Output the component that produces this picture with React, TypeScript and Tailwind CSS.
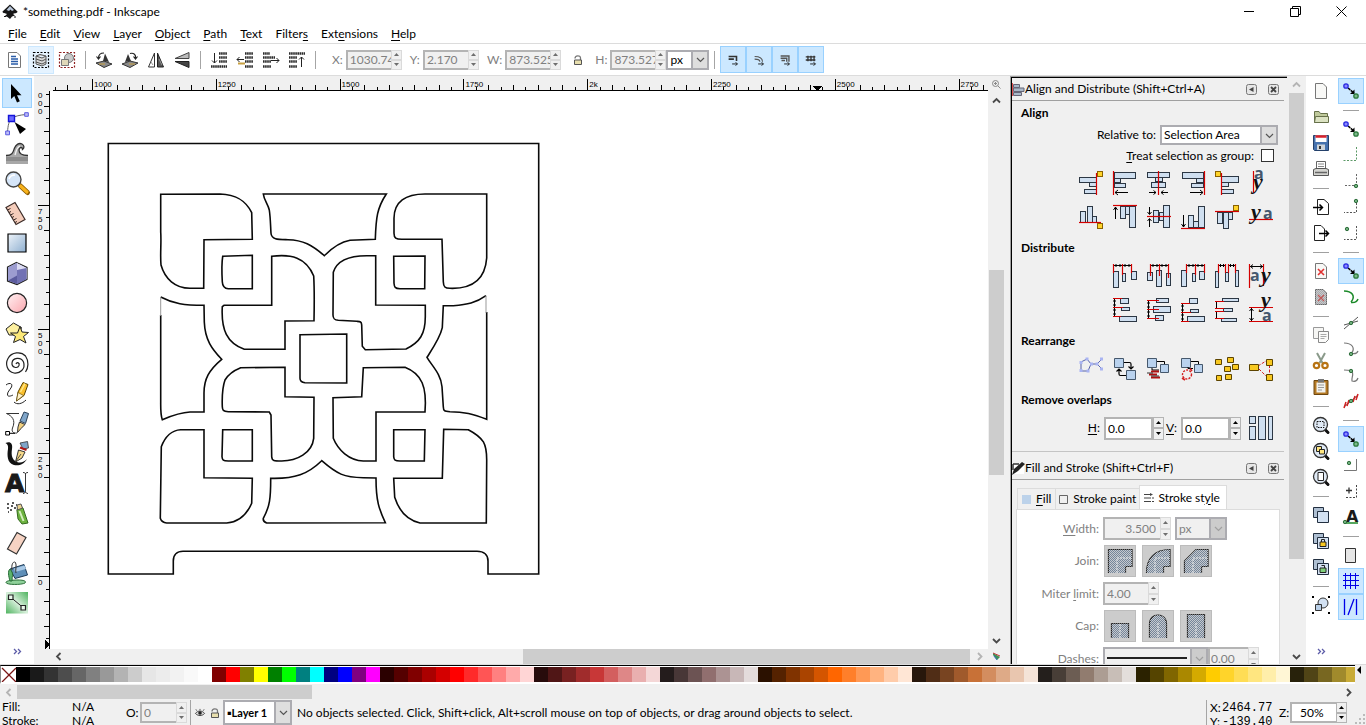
import type { ReactNode } from 'react';

type Box = [number, number, number, number];

/* ---------- shared bits ---------- */

function Ico({ size = 24, box = 24, children }: { size?: number; box?: number; children: ReactNode }) {
    return (
        <svg width={size} height={size} viewBox={`0 0 ${box} ${box}`} fill="none" className="shrink-0 overflow-visible" aria-hidden="true">
            {children}
        </svg>
    );
}

function Chevron({ dir, faded }: { dir: 'up' | 'down' | 'left' | 'right'; faded?: boolean }) {
    const d = {
        up: 'M2 7.5L5.5 4L9 7.5',
        down: 'M2 4L5.5 7.5L9 4',
        left: 'M7.5 2L4 5.5L7.5 9',
        right: 'M4 2L7.5 5.5L4 9',
    }[dir];
    return (
        <Ico size={11} box={11}>
            <path d={d} stroke={faded ? '#b4b4b4' : '#4a4a4a'} strokeWidth="1.8" />
        </Ico>
    );
}

function Spin({ dim }: { dim?: boolean }) {
    const fill = dim ? '#6e6e6e' : '#000';
    const edge = dim ? 'border-[#dadada]' : 'border-[#b4b4b4]';
    return (
        <span className="flex h-full w-[11px] shrink-0 flex-col">
            <button type="button" aria-label="Increase" className={`flex flex-1 items-center justify-center border bg-[#f0f0f0] ${edge}`}>
                <Ico size={5} box={5}><path d="M0 4L2.5 1L5 4Z" fill={fill} /></Ico>
            </button>
            <button type="button" aria-label="Decrease" className={`flex flex-1 items-center justify-center border bg-[#f0f0f0] ${edge}`}>
                <Ico size={5} box={5}><path d="M0 1L2.5 4L5 1Z" fill={fill} /></Ico>
            </button>
        </span>
    );
}

function Picker({ id, label, value, className, dim, bold }: { id: string; label: string; value: string; className: string; dim?: boolean; bold?: boolean }) {
    return (
        <span className={`relative flex shrink-0 ${className}`}>
            <select
                id={id}
                aria-label={label}
                disabled={dim}
                className={`h-full w-full appearance-none overflow-hidden border-2 border-[#acacb1] pl-[2px] opacity-100 ${dim ? 'bg-[#f0f0f0] text-[#808080]' : 'bg-white text-black'} ${bold ? 'text-[11px] font-bold' : ''}`}
            >
                <option>{value}</option>
            </select>
            <span className={`pointer-events-none absolute inset-y-0 right-0 flex w-[18px] items-center justify-center border-2 border-[#acacb1] ${dim ? 'bg-[#cccccc]' : 'bg-[#dedede]'}`}>
                <Ico size={9} box={9}><path d="M1 3L4.5 6.5L8 3" stroke={dim ? '#a0a0a0' : '#555'} strokeWidth="1.2" /></Ico>
            </span>
        </span>
    );
}

function Mnemonic({ text, at }: { text: string; at: number }) {
    return (
        <span>
            {text.slice(0, at)}
            <span className="underline underline-offset-2">{text[at]}</span>
            {text.slice(at + 1)}
        </span>
    );
}

/* ---------- title bar and menu ---------- */

function TitleBar() {
    return (
        <header className="flex h-6 shrink-0 items-center bg-white pr-[2px] pl-[2px]">
            <Ico size={16} box={16}>
                <path d="M8 0.5L15.5 7.5C15.5 9.5 12 9 11 10L13 11.5L10 12.5L8 15L5.5 13L3 12L5 10C3.5 9 0.5 9.5 0.5 7.5Z" fill="#161616" />
                <path d="M8 2L12 6L10 7L8.5 5.5L7 7L4.5 6Z" fill="#b8c6da" />
                <path d="M2 12.5H4M12 13H14" stroke="#161616" />
            </Ico>
            <h1 className="ml-[5px]">*something.pdf - Inkscape</h1>
            <div className="ml-auto flex h-full">
                <button type="button" title="Minimize" className="flex w-[46px] items-center justify-center pb-[2px]">
                    <Ico size={11} box={11}><path d="M0 5.5H10" stroke="#000" /></Ico>
                </button>
                <button type="button" title="Restore" className="flex w-[46px] items-center justify-center pb-[2px]">
                    <Ico size={11} box={11}><path d="M.5 2.5H8.5V10.5H.5ZM2.5 2.5V.5H10.5V8.5H8.5" stroke="#000" /></Ico>
                </button>
                <button type="button" title="Close" className="flex w-[46px] items-center justify-center pb-[2px]">
                    <Ico size={11} box={11}><path d="M.5 .5L10.5 10.5M10.5 .5L.5 10.5" stroke="#000" /></Ico>
                </button>
            </div>
        </header>
    );
}

const menus: [string, number][] = [
    ['File', 0], ['Edit', 0], ['View', 0], ['Layer', 0], ['Object', 0],
    ['Path', 0], ['Text', 0], ['Filters', 6], ['Extensions', 3], ['Help', 0],
];

function MenuBar() {
    return (
        <nav className="flex h-5 shrink-0 items-center gap-[13px] border-b border-[#dcdcdc] bg-white pl-2">
            {menus.map(([text, at]) => (
                <button type="button" key={text}>
                    <Mnemonic text={text} at={at} />
                </button>
            ))}
        </nav>
    );
}

/* ---------- tool controls bar ---------- */

const rows = (d: string) => <path d={d} stroke="#2b2b2b" strokeWidth="2.6" strokeDasharray="1.6 .5" />;

const controlIcons: Record<string, ReactNode> = {
    'Select all': (
        <>
            <path d="M2.5 1.5H11L14.5 5V16.5H2.5Z" fill="#fff" stroke="#777" />
            <path d="M5 5.5H10M5 8H12M5 10.5H12M5 13H12" stroke="#2a5ca8" strokeWidth="1.4" />
        </>
    ),
    'Select in all layers': (
        <>
            <path d="M1.5 1.5H16.5V16.5H1.5Z" stroke="#000" strokeDasharray="2 1.5" strokeWidth="1.2" />
            <path d="M4 5L8 3.5L14 5L10 7ZM4 8L10 10L14 8M4 11L10 13L14 11M4 5V13L10 15L14 13V5" fill="#d6d6d6" stroke="#555" />
        </>
    ),
    Deselect: (
        <>
            <path d="M1.5 1.5H16.5V16.5H1.5Z" stroke="#902020" strokeDasharray="2 1.5" strokeWidth="1.2" />
            <circle cx="11" cy="7" r="4.5" fill="#c8c8c8" stroke="#777" />
            <path d="M3.5 8.5H10.5V14.5H3.5Z" fill="#e0d8b8" stroke="#777" />
        </>
    ),
    'Rotate left': (
        <>
            <path d="M1 12L9 10L17 13L9 16.5Z" fill="#8a8a8a" stroke="#333" />
            <path d="M10 2.500L14 11L8 10Z" fill="#333" />
            <path d="M9 2C5 2 3.5 4 3.5 7M1.5 5.5L3.5 8L5.5 5.5" stroke="#222" strokeWidth="1.2" />
            <path d="M4 13H10" stroke="#c8a040" />
        </>
    ),
    'Rotate right': (
        <>
            <path d="M17 12L9 10L1 13L9 16.5Z" fill="#8a8a8a" stroke="#333" />
            <path d="M7 3L4 11L10 10Z" fill="#333" />
            <path d="M9 2.500C13 1.500 15 4 14.500 7M12.500 5.500L14.500 8L16.500 5.500" stroke="#222" strokeWidth="1.2" />
            <path d="M8 13H14" stroke="#c8a040" />
        </>
    ),
    'Flip horizontal': (
        <>
            <path d="M7.500 2V16H1.500Z" fill="#fff" stroke="#333" />
            <path d="M10.500 2V16H16.500Z" fill="#555" stroke="#222" />
            <path d="M4 11L6 14M12 8L15 14" stroke="#999" />
        </>
    ),
    'Flip vertical': (
        <>
            <path d="M2 7.500H16V1.500Z" fill="#bbb" stroke="#444" />
            <path d="M2 10.500H16V16.500Z" fill="#444" stroke="#222" />
        </>
    ),
    'Lower to bottom': <>{rows('M9 2.500H17M9 6.500H17M9 10.500H17M1 15.500H17')}<path d="M4.500 2V12M2 9.500L4.500 12L7 9.500" stroke="#222" /></>,
    Lower: <>{rows('M9 2.500H17M9 6.500H17M9 10.500H17M9 15.500H17')}<path d="M8 8.500H1M3.500 6L1 8.500L3.500 11" stroke="#222" /><path d="M2 12.500H9" stroke="#c8a040" strokeWidth="2" /></>,
    Raise: <>{rows('M1 2.500H8M1 6.500H13M1 10.500H9M1 15.500H9')}<path d="M9 9.500H17M14.500 7L17 9.500L14.500 12" stroke="#222" /></>,
    'Raise to top': <>{rows('M1 2.500H17M1 6.500H9M1 10.500H9M1 15.500H9')}<path d="M13.500 16V6M11 8.500L13.500 6L16 8.500" stroke="#222" /></>,
};

function ControlButton({ name, active }: { name: string; active?: boolean }) {
    return (
        <button type="button" title={name} className={`flex h-7 w-[26px] shrink-0 items-center justify-center ${active ? 'bg-[#e5f3ff] outline -outline-offset-1 outline-[#cce8ff]' : ''}`}>
            <Ico size={18} box={18}>{controlIcons[name]}</Ico>
        </button>
    );
}

function Separator() {
    return <span className="mx-[5px] h-[18px] w-px shrink-0 bg-[#a5a5a5]" />;
}

function CoordField({ label, value }: { label: string; value: string }) {
    return (
        <div className="flex h-5 shrink-0 items-center text-[#808080]">
            <label htmlFor={`coord-${label}`} className="pr-[3px]">{label}:</label>
            <input id={`coord-${label}`} defaultValue={value} className="h-full w-[45px] border-2 border-r-0 border-[#b4b4b4] bg-[#f0f0f0] pl-[2px]" />
            <Spin dim />
        </div>
    );
}

const affectIcons: [string, ReactNode][] = [
    ['Scale stroke width', <path d="M3 4H12V9M3 7H9" stroke="#333" strokeWidth="1.8" />],
    ['Scale rounded corners', <path d="M3 4C9 4 12 6 12 10M3 7C7 7 9 8 9 10" stroke="#555" strokeWidth="1.2" />],
    ['Move gradients', <path d="M3 3.500H12.500V10M3 6H10V10M4 8.500H8" stroke="#555" strokeWidth="1.6" />],
    ['Move patterns', <path d="M2 4.500H13M2 8H13M4.500 3V9.500M8 3V9.500M11.500 3V9.500" stroke="#333" strokeWidth="1.5" />],
];

function ControlsBar() {
    return (
        <div className="flex h-8 shrink-0 items-center border-b border-[#dcdcdc] bg-white pl-[2px]">
            <ControlButton name="Select all" />
            <ControlButton name="Select in all layers" active />
            <ControlButton name="Deselect" />
            <Separator />
            <ControlButton name="Rotate left" />
            <ControlButton name="Rotate right" />
            <ControlButton name="Flip horizontal" />
            <ControlButton name="Flip vertical" />
            <Separator />
            <ControlButton name="Lower to bottom" />
            <ControlButton name="Lower" />
            <ControlButton name="Raise" />
            <ControlButton name="Raise to top" />
            <Separator />
            <div className="flex items-center gap-2 pl-[11px]">
                <CoordField label="X" value="1030.745" />
                <CoordField label="Y" value="2.170" />
                <CoordField label="W" value="873.525" />
                <button type="button" title="Lock width and height" className="px-1">
                    <LockIcon />
                </button>
                <CoordField label="H" value="873.527" />
            </div>
            <Picker id="unit" label="Unit" value="px" className="h-5 w-[43px]" />
            <Separator />
            <div className="flex">
                {affectIcons.map(([name, icon]) => (
                    <button type="button" key={name} title={name} className="flex h-[27px] w-[26px] items-center justify-center border border-[#99d1ff] bg-[#cce8ff]">
                        <Ico size={14} box={16}>{icon}<path d="M7 12.500H13M11 10.500L13 12.500L11 14.500" stroke="#111" /></Ico>
                    </button>
                ))}
            </div>
        </div>
    );
}

function LockIcon() {
    return (
        <Ico size={10} box={10}>
            <path d="M2 3.500C2 0 7.500 0 7.500 3V5" stroke="#777" strokeWidth="1.3" />
            <path d="M1.500 5H8.500V9.500H1.500Z" fill="#e8dfae" stroke="#555" />
        </Ico>
    );
}

/* ---------- left toolbox ---------- */

const tools: [string, ReactNode][] = [
    ['Select', <path d="M6 3V18L9.300 15L12 21.500L14.800 20.300L12 14.300H16.500Z" fill="#000" />],
    ['Edit nodes', (
        <>
            <path d="M2.500 21C3 14 4 10 6.500 7.500C10 5 15 4 21 3.500" stroke="#666" />
            <path d="M3.500 4.500H9.500V10.500H3.500Z" fill="#6a6aff" stroke="#1414d8" strokeWidth="1.400" />
            <path d="M.7 20H4.500V23.800H.7ZM19.700 1.700H23.300V5.300H19.700Z" fill="#bcbcf6" stroke="#5a5ae0" />
            <path d="M9.500 11L21 18L15 23Z" fill="#000" />
        </>
    )],
    ['Tweak', (
        <>
            <path d="M1 14.500C8 14.500 8 11 9.500 7C11 3.500 14 1.500 17 3C19.500 4.500 19.500 7 17.500 8.500C17.500 6 14.500 5.500 14 9C14 12 16 14.500 23 14.500V23H1Z" fill="#a8a8a8" />
            <path d="M1 16H23V20H1Z" fill="#8c8c8c" />
            <path d="M1 14.500C8 14.500 8 11 9.500 7C11 3.500 14 1.500 17 3C19.500 4.500 19.500 7 17.500 8.500C17.500 6 14.500 5.500 14 9C14 12 16 14.500 23 14.500" stroke="#333" strokeWidth="1.300" />
            <path d="M10 14C11.500 10 11 7 15 5" stroke="#f4f4f4" strokeWidth="1.300" />
        </>
    )],
    ['Zoom', (
        <>
            <path d="M15.500 15L22.500 21.500" stroke="#8a5a00" strokeWidth="5" strokeLinecap="round" />
            <path d="M15.500 15L22 21" stroke="#f7b21c" strokeWidth="3.200" strokeLinecap="round" />
            <circle cx="8.500" cy="8.500" r="7.500" fill="#d5e5f8" stroke="#444" strokeWidth="1.400" />
            <path d="M4 8C5 5 7 4 10 4" stroke="#fff" strokeWidth="1.500" />
        </>
    )],
    ['Measure', (
        <>
            <path d="M1 6.500L10 1.500L20 18.500L11 23.500Z" fill="#f5cdbb" stroke="#3c2c28" strokeWidth="1.200" />
            <path d="M2.500 9L5.500 7.500M4 11.500L6 10.500M5.500 14L8.500 12.500M7 16.500L9 15.500M8.500 19L11.500 17.500M10 21.500L12 20.500" stroke="#3c2c28" />
        </>
    )],
    ['Rectangle', (
        <>
            <defs><linearGradient id="rectFill" x1="0" y1="0" x2="1" y2="1"><stop stopColor="#eef4fa" /><stop offset="1" stopColor="#8eafd0" /></linearGradient></defs>
            <path d="M3 3H21V21H3Z" fill="url(#rectFill)" stroke="#000" strokeWidth="1.200" />
        </>
    )],
    ['3D box', (
        <>
            <path d="M11.500 1.500L22 6.500V18.500L12 23.500L2.500 20V6Z" fill="#c9c9ea" stroke="#222" strokeWidth="1.200" />
            <path d="M3 6.500L12 1.800V15L3 19.500Z" fill="#9c9cd0" />
            <path d="M12 2L21.500 7V18L12 15Z" fill="#dcdcf4" />
            <path d="M3 19.500L12 14.500L21.500 18L12 23Z" fill="#5b5b9e" />
            <path d="M12 9L21.500 7V18L12 23Z" fill="#7272b4" />
        </>
    )],
    ['Ellipse', (
        <>
            <defs><linearGradient id="ellipseFill" x1="0" y1="0" x2="1" y2="1"><stop stopColor="#fff2f3" /><stop offset="1" stopColor="#fba6ae" /></linearGradient></defs>
            <circle cx="12" cy="12" r="9.600" fill="url(#ellipseFill)" stroke="#222" strokeWidth="1.200" />
        </>
    )],
    ['Star', (
        <>
            <path d="M8.500 2L16.500 6.500L14 14H4L1 8Z" fill="#fdf0a0" stroke="#222" />
            <path d="M15 5.500L17 11L23.500 11.500L18.500 15.500L21 22L15 18.500L8.500 21.500L10.500 15.500L5.500 12H12.500Z" fill="#fbe878" stroke="#222" />
        </>
    )],
    ['Spiral', <path d="M11 13C12 10.500 15 12 14 14.500C12.500 18 6.500 16.500 7 12C7.500 6.500 16 5.500 18.500 11C21 18 14.500 23 9 22C2 20.500 0 13 3 7.500C6.500 1 16 0 20.500 5C24 10 23.500 17 20.500 21" stroke="#222" strokeWidth="1.200" />],
    ['Pencil', (
        <>
            <path d="M1 4C4 1.500 8 2 6.500 6C5 9 2 11 2.500 14C3 16 6 15 8 14" stroke="#222" />
            <path d="M9 21C12 24 17 23 21 19" stroke="#222" />
            <path d="M13 11L18 1.500L23 3.500L19 14.500L11.500 20Z" fill="#fbc02d" stroke="#5c4400" />
            <path d="M13 11.500L18.500 14.500L11.500 20Z" fill="#fff1c9" stroke="#5c4400" strokeWidth=".6" />
            <path d="M15.500 11L20 2.500" stroke="#ffe98a" strokeWidth="1.500" />
        </>
    )],
    ['Bezier pen', (
        <>
            <path d="M1.500 2.500H14M1.500 2.500C7 5 11 9 7.500 17C6.500 20 7.500 22.500 12 22" stroke="#333" />
            <path d="M.7 20.500H4.500V24H.7Z" fill="#fff" stroke="#000" />
            <path d="M5 22.300H10" stroke="#000" />
            <path d="M15 10L19 1L23.500 2.500L20.500 12.500Z" fill="#7fa5c9" stroke="#2c4259" />
            <path d="M14.500 11L20 13.500L16 17.500L12.500 21.500L13 16Z" fill="#f0d080" stroke="#333" />
        </>
    )],
    ['Calligraphy', (
        <>
            <path d="M.5 2C5 0 8 2 7 8C6 14 7 19 12 21C16 22.500 19 21 22 18C19 23.500 14 25 9 24C2 22 2 14 3 8C3.500 4 2 3 .5 2Z" fill="#111" />
            <path d="M15 2L22.500 .500L23.500 7L18 8Z" fill="#7fa5c9" stroke="#333" strokeWidth=".8" />
            <path d="M15 6.500L21.500 9" stroke="#b01818" strokeWidth="2" />
            <path d="M13.500 9L20 11L17 17L10.500 21Z" fill="#f6d98a" stroke="#333" />
            <path d="M11 20L16 13" stroke="#333" strokeWidth=".8" />
        </>
    )],
    ['Text', (
        <>
            <text x="0" y="21" fontSize="25" fontWeight="900" fontFamily="'DejaVu Sans', sans-serif" fill="#1a1a1a" stroke="#1a1a1a">A</text>
            <path d="M18 1.500C19.500 1.500 20.500 2 20.500 3V20.500C20.500 21.500 19.500 22.500 18 22.500M23 1.500C21.500 1.500 20.500 2 20.500 3M20.500 20.500C20.500 21.500 21.500 22.500 23 22.500" stroke="#222" strokeWidth=".9" />
        </>
    )],
    ['Spray', (
        <>
            <path d="M2 3H4M6 5H8M2 7H4M7 2H9M9 7H11M5 9H7M11 4H12M3 11H4" stroke="#222" strokeWidth="1.600" />
            <path d="M12 10C11 8 15 6 18 7L23 22L17 23L13 18Z" fill="#6db33f" stroke="#33691e" />
            <path d="M14.500 10L18.500 20" stroke="#d4efbf" strokeWidth="2" />
            <path d="M12 4L16 3L17.500 7L12.500 9Z" fill="#ead28f" stroke="#555" />
        </>
    )],
    ['Eraser', <path d="M12 1.500L21 6.500L11.500 23L2.500 18Z" fill="#f6d3c3" stroke="#333" strokeWidth="1.200" />],
    ['Paint bucket', (
        <>
            <path d="M1 21.500C1 19.500 8 19 13 19C18 19 22 20 20 22C17 24 1 24 1 21.500Z" fill="#8fd19a" stroke="#2b6e39" />
            <path d="M5 8L19 3.500L22.500 14L10 17.500Z" fill="#5f8fb8" stroke="#1e3b57" />
            <path d="M9 7.500L19.500 4.500L21 8L10 11Z" fill="#a9c9e6" />
            <path d="M5 8C2.500 10 3.500 15 5 20H7C7 15 8.500 13 6.500 10Z" fill="#5db46c" stroke="#2b6e39" />
            <path d="M7 9C6 2 9 0 10.500 1.500C12 4 10 10 11 12" stroke="#333" />
        </>
    )],
    ['Gradient', (
        <>
            <defs><linearGradient id="toolGrad" x1="0" y1="1" x2="1" y2="0"><stop stopColor="#4fb35f" /><stop offset=".5" stopColor="#d8f0dc" /><stop offset="1" stopColor="#4fb35f" /></linearGradient></defs>
            <path d="M1 1H23V22.500H1Z" fill="url(#toolGrad)" />
            <path d="M6 6.500L18 16.500" stroke="#222" />
            <path d="M3.500 4H8V8.500H3.500ZM16 14.500H20.500V19H16Z" fill="#e9f7eb" stroke="#222" strokeWidth="1.200" />
        </>
    )],
];

function Toolbox() {
    return (
        <aside className="flex w-[34px] shrink-0 flex-col items-center bg-white pt-[2px]">
            {tools.map(([name, icon], i) => (
                <button
                    type="button"
                    key={name}
                    title={name}
                    className={`flex h-[30px] w-[30px] shrink-0 items-center justify-center border ${i === 0 ? 'border-[#99d1ff] bg-[#cce8ff]' : 'border-transparent'}`}
                >
                    <Ico>{icon}</Ico>
                </button>
            ))}
            <More />
        </aside>
    );
}

function More() {
    return (
        <button type="button" title="More" className="mt-auto flex h-[26px] shrink-0 items-center justify-center">
            <Ico size={9} box={9}><path d="M1 2L3.500 4.500L1 7M5 2L7.500 4.500L5 7" stroke="#5c5ca8" strokeWidth="1.300" /></Ico>
        </button>
    );
}

/* ---------- rulers and canvas ---------- */

const topLabels = ['1000', '1250', '1500', '1750', '2k', '2250', '2500', '2750'];
const sideLabels = ['', '750', '500', '250', '0'];
const step = 12.38;

function TopRuler() {
    return (
        <svg height="15" className="block min-w-0 flex-1 overflow-hidden font-['Liberation_Sans',sans-serif]" shapeRendering="crispEdges" aria-hidden="true">
            {Array.from({ length: 110 }, (_, i) => {
                const x = Math.round(42 + (i - 3) * step);
                const top = (i - 3) % 10 === 0 ? 3 : (i - 3) % 2 === 0 ? 9 : 11;
                return <rect key={i} x={x} y={top} width="1" height={15 - top} fill="#000" />;
            })}
            {topLabels.map((text, i) => (
                <text key={text} x={44 + i * 123.8} y="11" fontSize="8" fill="#000">{text}</text>
            ))}
            <rect x="3" y="14" width="100%" height="1" fill="#000" />
            <path d="M763 10H772L767.500 15Z" fill="#000" />
        </svg>
    );
}

function SideRuler() {
    return (
        <svg width="16" className="block h-full shrink-0 overflow-hidden font-['Liberation_Sans',sans-serif]" shapeRendering="crispEdges" aria-hidden="true">
            {Array.from({ length: 46 }, (_, i) => {
                const y = Math.round(114 + (i - 9) * step);
                const left = (i - 9) % 10 === 0 ? 4 : (i - 9) % 2 === 0 ? 10 : 12;
                return <rect key={i} x={left} y={y} width={16 - left} height="1" fill="#000" />;
            })}
            {sideLabels.map((text, i) =>
                text.split('').map((ch, j) => (
                    <text key={`${i}-${j}`} x="4" y={123 + (i - 1) * 123.8 + j * 8} fontSize="8" fill="#000">{ch}</text>
                )),
            )}
            {[7, 15, 23].map(y => <text key={y} x="4" y={y} fontSize="8" fill="#000">0</text>)}
            <rect x="15" y="0" width="1" height="100%" fill="#000" />
            <path d="M11 549V558L16 553.500Z" fill="#000" />
        </svg>
    );
}

const artwork = [
    'M108.300 143.500H538.700V574H488V561C488 555 484 551.300 477 551.300H183C177 551.300 173.300 555 173.300 561V574H108.300Z',
    'M160.700 194.300L220 194C237 194.500 246 201 251.700 212.700L252.300 239.300L204 239.700L203.700 288.300H190C175 288 165 279 161 265C160 255 161.500 242 160.700 232Z',
    'M222.700 256.300L252.300 255.300V288.700H228.300C224 288.500 222.500 286 222.300 281.700C221.800 273 221.800 262 222.700 256.300Z',
    'M263.300 194H386.300C377 208 376 218 375.300 239.300L350 240.300C340 242 331 249 324.300 255.700C312 245 303 240 288 239.700C279 239.500 271.500 240 271 233.300C270.500 226 270.500 218 269.300 210C268 204 264 200 263.300 194Z',
    'M271.700 256.300C291 254 306 257 313.700 276C314.500 290 314.300 306 314 320.700L285 321V349.300H244.300C227 343 221 330 222.300 306.700L224 305.300H271.700Z',
    'M160.700 297C174 304 184 305.300 204 305.300L204.300 322C205 340 212 349 221.700 359.300C209 370 204 379 204 393V412H190C179 412.500 171 416 162.300 419.700C160.500 415 160.700 408 160.700 403V315',
    'M375.700 255.700V305L425.300 305.300V316.700C425.300 334 420 342 406 349L365.300 349.700L362.300 346.300L361.700 325C361.500 321.500 360 321.600 356.700 321.300L338.300 320.300C334.500 320 333 319 333 315L333.300 272.300C337 260 350 255.700 366.700 255.700Z',
    'M393.700 256.300L425 256L424.700 288.700H400C395 288.700 394.300 287 394 283.300Z',
    'M486.700 194H426.700C405 193.500 394 202 394 218.300V233.300C394 238 396 239.300 401.700 239.300H442L443.300 281.700C443.500 287 445 288.300 450 288.300C471 289 485 281 486.700 258Z',
    'M486.700 312V419.300C473 414 464 411.700 450 411.700C444 411.500 443.500 411 443.300 406.700L442 386.700C441 374 432 366 427 357.300C433 348 440 338 442.300 327.700L443.300 305.700H453.300C467 304.500 476 303 486 295.700',
    'M300 334.700L346.700 334V383L305 382.700C301 382.500 300 381 300 378.300Z',
    'M240.700 367.700L285 367.300V396.700L314 397.300L313.700 438.300C312 453 297 461 281.700 461C274 461 272 461 271.700 456.700L271 415L269.300 412L228.300 411.700C223 411.500 222.500 410 222.300 406.700C222 398 222.500 387 225 380C229 373 235 370 240.700 367.700Z',
    'M363.300 367.700L405 367.300C422 374 427 387 425 412H376V461H363.300C349 460.500 338 450 333.300 438.300L333 397.700L361.700 396.700Z',
    'M222.700 429.700H252.300V461H228.300C223 461 222.300 460 222 456.700Z',
    'M393.700 429.700H425L424.300 461H400C395 461 394 460 393.700 456.700Z',
    'M180.700 429.700H204V477.700L252.300 478.300L251.700 503.300C247 514 240 522 226.700 523L166.700 523C162 522.500 161 520.500 160.300 518.300L161.300 446.700C165 437 172 430 180.700 429.700Z',
    'M270.700 478.300C295 479 308 474 321.700 460.700C337 474 344 477.500 363.300 477.700L376 478C376 501 379 509 385.300 522.700L266.700 523C264 522 263 520 263.300 518.300C270 506 270.700 498 270.700 478.300Z',
    'M393.700 478.300H442.300L443.700 429.300L468.300 429.700C484 438 486.700 444 486.700 460L486.300 523L420 523C407 520 399 511 394.700 497.300Z',
];

function Canvas() {
    return (
        <main className="min-w-0 flex-1 overflow-hidden bg-white">
            <svg className="block h-full w-full" role="img" aria-label="Lattice panel drawing">
                <g transform="translate(-50 -91)" fill="none" stroke="#0a0a0a" strokeWidth="1.600">
                    {artwork.map(d => <path key={d} d={d} />)}
                    <path d="M160.700 297V316M486 295.700V313" stroke="#999" strokeWidth="1" />
                </g>
            </svg>
        </main>
    );
}

function Workspace() {
    return (
        <section className="flex min-w-0 flex-1 flex-col">
            <div className="flex h-[15px] shrink-0">
                <span className="w-4 shrink-0" />
                <TopRuler />
                <button type="button" title="Zoom on resize" className="flex w-4 shrink-0 items-center justify-center">
                    <Ico size={10} box={10}><circle cx="4.500" cy="4.500" r="3" fill="#eee" stroke="#888" /><path d="M3 4.500H6M4.500 3V6M7 7L9.500 9.500" stroke="#888" /></Ico>
                </button>
            </div>
            <div className="flex min-h-0 flex-1">
                <SideRuler />
                <Canvas />
                <div className="flex w-4 shrink-0 flex-col items-center">
                    <button type="button" title="Scroll up" className="flex h-[18px] shrink-0 items-center"><Chevron dir="up" /></button>
                    <span className="grow-[161]" />
                    <span className="w-[15px] grow-[205] bg-[#cdcdcd]" />
                    <span className="grow-[157]" />
                    <button type="button" title="Scroll down" className="flex h-[17px] shrink-0 items-center"><Chevron dir="down" /></button>
                </div>
            </div>
            <div className="flex h-[15px] shrink-0">
                <span className="w-4 shrink-0" />
                <div className="flex flex-1 items-stretch">
                    <button type="button" title="Scroll left" className="flex w-[17px] shrink-0 items-center justify-center"><Chevron dir="left" /></button>
                    <span className="grow-[456]" />
                    <span className="grow-[447] bg-[#cdcdcd]" />
                    <button type="button" title="Scroll right" className="flex w-[18px] shrink-0 items-center justify-center"><Chevron dir="right" faded /></button>
                </div>
                <button type="button" title="Color management" className="flex w-4 shrink-0 items-center justify-center">
                    <Ico size={9} box={9}><path d="M1 1L8 5L5 8L1 3Z" fill="#3f8f57" /><path d="M1 1L8 4" stroke="#c03a3a" /><path d="M2 4L5 8" stroke="#3a6ac0" /></Ico>
                </button>
            </div>
        </section>
    );
}

/* ---------- align and distribute ---------- */

function Bars({ bars, red, ink, gold }: { bars: Box[]; red?: string; ink?: string; gold?: [number, number] }) {
    return (
        <Ico>
            {bars.map(([x, y, w, h]) => (
                <rect key={`${x}-${y}`} x={x + 0.5} y={y + 0.5} width={w - 1} height={h - 1} fill="#cfdff0" stroke="#2c3744" />
            ))}
            {ink && <path d={ink} stroke="#000" />}
            {red && <path d={red} stroke="#d40000" strokeWidth="1.200" />}
            {gold && <rect x={gold[0] + 0.5} y={gold[1] + 0.5} width="5" height="5" fill="#ffd42a" stroke="#8a6200" />}
        </Ico>
    );
}

function Letters({ ax, ay, yx, yy, red, ink }: { ax: number; ay: number; yx: number; yy: number; red: string; ink?: string }) {
    return (
        <Ico>
            <text x={ax} y={ay} fontSize="16" fontWeight="bold" fontFamily="'Open Sans', sans-serif" fill="#45586e">a</text>
            <path d={red} stroke="#d40000" strokeWidth="1.200" />
            {ink && <path d={ink} stroke="#000" />}
            <text x={yx} y={yy} fontSize="22" fontWeight="bold" fontStyle="italic" fontFamily="'Liberation Serif', serif" fill="#111">y</text>
        </Ico>
    );
}

const alignRows: [string, ReactNode][][] = [
    [
        ['Align right edges to left of anchor', <Bars bars={[[0, 6, 18, 6], [10, 11, 8, 5], [5, 18, 13, 5]]} red="M17.500 2V24" gold={[18, 0]} />],
        ['Align left edges', <Bars bars={[[1, 1, 22, 7], [1, 7, 7, 5], [1, 12, 12, 5]]} red="M.5 0V24" ink="M15 21.500H2M5 19L2 21.500L5 24" />],
        ['Center on vertical axis', <Bars bars={[[0, 1, 23, 6], [8, 6, 8, 5], [4, 11, 15, 6]]} red="M11.500 0V24" ink="M2 21.500H9M6.500 19.500L9 21.500L6.500 23.500M21 21.500H14M16.500 19.500L14 21.500L16.500 23.500" />],
        ['Align right sides', <Bars bars={[[1, 1, 22, 7], [15, 7, 8, 5], [10, 12, 13, 5]]} red="M23.500 0V24" ink="M9 21.500H22M19 19L22 21.500L19 24" />],
        ['Align left edges to right of anchor', <Bars bars={[[6, 5, 18, 7], [6, 11, 8, 5], [6, 18, 13, 5]]} red="M6.500 2V24" gold={[0, 0]} />],
        ['Align baseline anchors horizontally', <Letters ax={5} ay={8} yx={4} yy={18} red="M4.500 0V22" />],
    ],
    [
        ['Align bottom edges to top of anchor', <Bars bars={[[1, 6, 6, 12], [8, 1, 6, 17], [13, 11, 5, 7]]} red="M0 17.500H22" gold={[18, 18]} />],
        ['Align top edges', <Bars bars={[[7, 1, 6, 13], [12, 1, 5, 9], [16, 1, 7, 22]]} red="M0 .5H24" ink="M2.500 14V2M.5 5L2.500 2L4.500 5" />],
        ['Center on horizontal axis', <Bars bars={[[6, 5, 6, 13], [12, 7, 5, 9], [16, 0, 7, 23]]} red="M0 11.500H24" ink="M2.500 2V9M.5 7L2.500 9.500L4.500 7M2.500 22V14M.5 16L2.500 13.500L4.500 16" />],
        ['Align bottom edges', <Bars bars={[[7, 10, 6, 13], [12, 16, 6, 7], [17, 1, 7, 22]]} red="M0 23.500H24" ink="M2.500 10V22M.5 19L2.500 22L4.500 19" />],
        ['Align top edges to bottom of anchor', <Bars bars={[[2, 7, 6, 12], [8, 7, 6, 17], [13, 7, 5, 8]]} red="M0 6.500H24" gold={[18, 0]} />],
        ['Align baseline anchors vertically', <Letters ax={14} ay={14} yx={2} yy={14} red="M0 14.500H24" />],
    ],
];

const distributeRows: [string, ReactNode][][] = [
    [
        ['Distribute left edges', <Bars bars={[[0, 7, 6, 17], [9, 9, 4, 9], [18, 7, 6, 9]]} red="M.5 0V9M9.500 0V11M18.500 0V9" ink="M1 1.500H18M3 0V3M7 0V3M12 0V3M16 0V3" />],
        ['Distribute centers horizontally', <Bars bars={[[0, 8, 6, 9], [9, 6, 6, 17], [19, 9, 5, 13]]} red="M3.500 0V12M12.500 0V12M21.500 0V14" ink="M4 1.500H21M6 0V3M10 0V3M15 0V3M19 0V3" />],
        ['Distribute right edges', <Bars bars={[[0, 6, 6, 17], [11, 9, 4, 9], [18, 7, 6, 9]]} red="M5.500 0V9M14.500 0V11M23.500 0V9" ink="M6 1.500H23M8 0V3M12 0V3M17 0V3M21 0V3" />],
        ['Equal horizontal gaps', <Bars bars={[[0, 7, 4, 17], [10, 8, 4, 10], [20, 6, 4, 17]]} red="M3.500 0V9M10.500 0V9M13.500 0V9M20.500 0V9" ink="M4 1.500H10M14 1.500H20M5.500 0V3M8.500 0V3M15.500 0V3M18.500 0V3" />],
        ['Distribute baselines horizontally', <Letters ax={1} ay={17} yx={12} yy={18} red="M.5 0V24M14.500 0V22" ink="M1 2.500H14M4 .500L1.500 2.500L4 4.500M11 .500L13.500 2.500L11 4.500" />],
    ],
    [
        ['Distribute top edges', <Bars bars={[[7, 0, 9, 6], [8, 9, 9, 4], [6, 18, 18, 6]]} red="M0 .5H9M0 9.500H10M0 18.500H8" ink="M1.500 1V18M0 3H3M0 7H3M0 12H3M0 16H3" />],
        ['Distribute centers vertically', <Bars bars={[[9, 0, 13, 5], [6, 8, 18, 7], [8, 17, 9, 6]]} red="M0 2.500H12M0 11.500H12M0 20.500H12" ink="M1.500 3V20M0 5H3M0 9H3M0 14H3M0 18H3" />],
        ['Distribute bottom edges', <Bars bars={[[8, 0, 9, 6], [9, 11, 9, 4], [6, 18, 18, 6]]} red="M0 5.500H9M0 14.500H10M0 23.500H8" ink="M1.500 6V23M0 8H3M0 12H3M0 17H3M0 21H3" />],
        ['Equal vertical gaps', <Bars bars={[[7, 0, 17, 4], [8, 10, 10, 4], [6, 20, 16, 4]]} red="M0 3.500H9M0 10.500H9M0 13.500H9M0 20.500H9" ink="M1.500 4V10M1.500 14V20" />],
        ['Distribute baselines vertically', <Letters ax={13} ay={23} yx={12} yy={9} red="M0 9.500H24M0 23.500H24" ink="M2.500 10V23M.5 13L2.500 10.500L4.500 13M.5 20L2.500 22.500L4.500 20" />],
    ],
];

const swapBoxes = <path d="M.5 1.500H9.500V10.500H.5ZM13.500 7.500H21.500V15.500H13.500Z" fill="#b9d2ee" stroke="#46586c" />;

const rearrange: [string, ReactNode][] = [
    ['Nicely arrange connector network', (
        <Ico>
            <path d="M2 5L8 2L12 7L9 14H2ZM12 7L18 7L23 2M18 7L23 12" stroke="#5560a8" />
            <path d="M.5 4H3.500V7H.5ZM6.500 .500H9.500V3.500H6.500ZM11 5.500H14V8.500H11ZM7.500 12.500H10.500V15.500H7.500ZM.5 12H3.500V15H.5ZM16.500 5.500H19.500V8.500H16.500ZM21 .500H24V3.500H21ZM21 10.500H24V13.500H21Z" fill="#a9b4f2" />
        </Ico>
    )],
    ['Exchange in selection order', (
        <Ico>
            <path d="M1.500 1.500H10.500V10.500H1.500ZM13.500 13.500H22.500V22.500H13.500Z" fill="#b9d2ee" stroke="#46586c" />
            <path d="M11 5.500H16.500C17.500 5.500 18 6 18 7V12M15.500 9.500L18 12L20.500 9.500M13 18.500H7.500C6.500 18.500 6 18 6 17V12M3.500 14.500L6 12L8.500 14.500" stroke="#000" strokeWidth="1.200" />
        </Ico>
    )],
    ['Exchange in stacking order', (
        <Ico>
            {swapBoxes}
            <path d="M10 4.500H17.500V7M12 13H5V11" stroke="#000" />
            <path d="M4 14.500H12M2 17.500H10M4 20.500H13" stroke="#b01010" strokeWidth="2.200" />
            <path d="M0 16H6M4 19H12" stroke="#333" />
        </Ico>
    )],
    ['Exchange around center', (
        <Ico>
            {swapBoxes}
            <path d="M10 4.500H17.500V7M12 11.500H7V10" stroke="#000" />
            <circle cx="6" cy="17.500" r="4.500" stroke="#d42020" strokeWidth="1.400" strokeDasharray="2 1.300" />
            <path d="M9 11.500L11 14M1 21L4 23" stroke="#d42020" strokeWidth="1.600" />
        </Ico>
    )],
    ['Randomize centers', <Ico><path d="M.5 2.500H6.500V7.500H.5ZM12.500 .500H18.500V5.500H12.500ZM17.500 7.500H23.500V12.500H17.500ZM9.500 9.500H15.500V14.500H9.500ZM1.500 18.500H6.500V23.500H1.500ZM10.500 17.500H16.500V22.500H10.500Z" fill="#f8c820" stroke="#5c4400" /></Ico>],
    ['Unclump', <Ico><path d="M9 9L17 4M10 12L17 19M20.500 8V17" stroke="#d42020" strokeDasharray="3 1.500" /><path d="M.5 7.500H9.500V13.500H.5ZM17.500 2.500H23.500V8.500H17.500ZM17.500 17.500H23.500V23.500H17.500Z" fill="#f8c820" stroke="#5c4400" /></Ico>],
];

function IconRow({ items }: { items: [string, ReactNode][] }) {
    return (
        <div className="flex h-[34px] justify-end pr-[6px]">
            {items.map(([name, icon]) => (
                <button type="button" key={name} title={name} className="flex w-[34px] items-center justify-center">
                    {icon}
                </button>
            ))}
        </div>
    );
}

function PanelTitle({ icon, children }: { icon: ReactNode; children: ReactNode }) {
    return (
        <div className="flex h-[23px] shrink-0 items-center border-b border-[#a0a0a0] pr-[5px]">
            {icon}
            <h2 className="flex-1">{children}</h2>
            <button type="button" title="Iconify" className="mr-[11px]">
                <Ico size={11} box={11}><rect x=".5" y=".5" width="10" height="10" rx="2" fill="#e6e6e6" stroke="#777" /><path d="M3 5.500L7.500 3V8Z" fill="#444" /></Ico>
            </button>
            <button type="button" title="Close panel">
                <Ico size={11} box={11}><rect x=".5" y=".5" width="10" height="10" rx="2" fill="#e6e6e6" stroke="#777" /><path d="M3 3L8 8M8 3L3 8" stroke="#444" strokeWidth="1.800" /></Ico>
            </button>
        </div>
    );
}

function GapField({ label }: { label: string }) {
    return (
        <div className="flex h-[23px] items-center">
            <label htmlFor={`gap-${label}`} className="pr-1"><span className="underline underline-offset-2">{label}</span>:</label>
            <input id={`gap-${label}`} defaultValue="0.0" className="h-full w-[49px] border-2 border-[#b4b4b4] bg-white pl-[2px]" />
            <Spin />
        </div>
    );
}

function AlignPanel() {
    return (
        <section className="mb-[5px] shrink-0 border-b border-[#c4c4c4] pb-[6px]">
            <PanelTitle icon={<Ico size={13} box={13}><path d="M1.500 1.500H7.500V4.500H1.500ZM1.500 5H12V8.500H1.500ZM1.500 9.500H9.500V12.500H1.500Z" fill="#a9b8c8" stroke="#667" /><path d="M.5 0V13" stroke="#e05050" /></Ico>}>
                Align and Distribute (Shift+Ctrl+A)
            </PanelTitle>
            <h3 className="flex h-6 items-center pl-[9px] font-bold">Align</h3>
            <div className="flex h-5 items-center justify-end pr-[6px]">
                <label htmlFor="relative" className="pr-1">Relative to:</label>
                <Picker id="relative" label="Relative to" value="Selection Area" className="h-5 w-[118px]" />
            </div>
            <div className="flex h-[21px] items-center justify-end pr-[10px]">
                <label htmlFor="group" className="pr-[7px]"><Mnemonic text="Treat selection as group:" at={0} /></label>
                <input id="group" type="checkbox" className="size-[13px] appearance-none border border-[#333] bg-white" />
            </div>
            {alignRows.map((items, i) => <IconRow key={i} items={items} />)}
            <h3 className="flex h-[25px] items-center pt-[2px] pl-[9px] font-bold">Distribute</h3>
            {distributeRows.map((items, i) => <IconRow key={i} items={items} />)}
            <h3 className="flex h-[25px] items-center pt-[2px] pl-[9px] font-bold">Rearrange</h3>
            <IconRow items={rearrange} />
            <h3 className="flex h-[25px] items-center pt-[2px] pl-[9px] font-bold">Remove overlaps</h3>
            <div className="flex h-[34px] items-center justify-end pr-[6px]">
                <GapField label="H" />
                <span className="w-[2px]" />
                <GapField label="V" />
                <button type="button" title="Remove overlaps" className="ml-[3px] flex w-[34px] justify-center">
                    <Bars bars={[[0, 0, 7, 8], [0, 10, 7, 14], [9, 0, 8, 24], [19, 0, 5, 24]]} />
                </button>
            </div>
        </section>
    );
}

/* ---------- fill and stroke ---------- */

function StrokeButton({ name, shape, mark }: { name: string; shape: string; mark: string }) {
    return (
        <button type="button" title={name} className="flex size-8 items-center justify-center border border-[#bcbcbc] bg-[#cccccc]">
            <Ico size={26} box={26}>
                <path d={shape} fill="#75869a" stroke="#222" strokeWidth="1.200" />
                <path d={shape} fill="url(#hatch)" />
                <path d={mark} stroke="#eee" strokeDasharray="2 1" />
            </Ico>
        </button>
    );
}

const joins: [string, string][] = [
    ['Miter join', 'M1.500 25V1.500H25V18.500H18.500V25'],
    ['Round join', 'M1.500 25C1.500 10 10 1.500 25 1.500V18.500H18.500V25'],
    ['Bevel join', 'M1.500 25V13L13 1.500H25V18.500H18.500V25'],
];

const caps: [string, string, string][] = [
    ['Butt cap', 'M4.500 25V10.500H21.500V25', 'M13 11V25'],
    ['Round cap', 'M4.500 25V11C4.500 -1 21.500 -1 21.500 11V25', 'M13 10V25'],
    ['Square cap', 'M4.500 25V1.500H21.500V25', 'M13 10V25'],
];

const fieldLabel = 'w-[82px] shrink-0 pr-[4px] text-right';

function StrokePanel() {
    return (
        <section className="flex min-h-0 flex-1 flex-col">
            <PanelTitle icon={<Ico size={13} box={13}><path d="M1 2H12V12H1Z" fill="#fff" /><path d="M0 13L2 7L10 0L13 2L6 9Z" fill="#222" /><path d="M1 2H7M1 2V8" stroke="#333" strokeWidth="1.500" /></Ico>}>
                Fill and Stroke (Shift+Ctrl+F)
            </PanelTitle>
            <div role="tablist" className="flex shrink-0 items-end pt-[5px] pl-[5px]">
                <button type="button" role="tab" aria-selected="false" className="flex h-[21px] items-center gap-[5px] border border-b-0 border-[#dcdcdc] px-[4px]">
                    <Ico size={9} box={9}><path d="M0 0H9V9H0Z" fill="#bcd2ea" /></Ico>
                    <Mnemonic text="Fill" at={0} />
                </button>
                <button type="button" role="tab" aria-selected="false" className="flex h-[21px] items-center gap-[5px] border-t border-[#dcdcdc] px-[3px]">
                    <Ico size={9} box={9}><path d="M.5 .5H8.500V8.500H.5Z" stroke="#666" /></Ico>
                    Stroke paint
                </button>
                <button type="button" role="tab" aria-selected="true" className="flex h-6 items-center gap-[4px] border border-b-0 border-[#dcdcdc] bg-white px-[4px] pr-[6px]">
                    <Ico size={10} box={10}><path d="M0 1.500H6M0 5H10M0 8.500H10" stroke="#444" strokeDasharray="7 1" /><path d="M6 0L9 1.500L6 3" fill="#444" /></Ico>
                    <Mnemonic text="Stroke style" at={9} />
                </button>
            </div>
            <div className="mr-1 ml-[4px] flex min-h-0 flex-1 flex-col gap-[5px] overflow-hidden border border-b-0 border-[#dcdcdc] bg-white pt-[7px] pl-1 text-[#808080]">
                <svg width="0" height="0" className="absolute" aria-hidden="true">
                    <defs>
                        <pattern id="hatch" width="2" height="2" patternUnits="userSpaceOnUse">
                            <path d="M0 0H1V1H0ZM1 1H2V2H1Z" fill="#c6c9ce" />
                        </pattern>
                    </defs>
                </svg>
                <div className="flex h-[23px] shrink-0 items-center">
                    <label htmlFor="width" className={fieldLabel}><Mnemonic text="Width:" at={0} /></label>
                    <input id="width" defaultValue="3.500" className="h-full w-[57px] border-2 border-r-0 border-[#b4b4b4] bg-[#f0f0f0] pr-1 text-right" />
                    <Spin dim />
                    <span className="w-1" />
                    <Picker id="width-unit" label="Width unit" value="px" dim className="h-[23px] w-[52px]" />
                </div>
                <div className="flex h-8 shrink-0 items-center">
                    <span className={fieldLabel}>Join:</span>
                    <div className="flex gap-[6px] pl-px">
                        {joins.map(([name, shape]) => <StrokeButton key={name} name={name} shape={shape} mark="M10 25V10H25" />)}
                    </div>
                </div>
                <div className="flex h-[23px] shrink-0 items-center">
                    <label htmlFor="miter" className={fieldLabel}><Mnemonic text="Miter limit:" at={6} /></label>
                    <input id="miter" defaultValue="4.00" className="h-full w-[45px] border-2 border-r-0 border-[#b4b4b4] bg-[#f0f0f0] pl-[2px]" />
                    <Spin dim />
                </div>
                <div className="flex h-8 shrink-0 items-center">
                    <span className={fieldLabel}>Cap:</span>
                    <div className="flex gap-[6px] pl-px">
                        {caps.map(([name, shape, mark]) => <StrokeButton key={name} name={name} shape={shape} mark={mark} />)}
                    </div>
                </div>
                <div className="flex h-[23px] shrink-0 items-center">
                    <label htmlFor="dashes" className={fieldLabel}>Dashes:</label>
                    <div className="relative flex">
                        <Picker id="dashes" label="Dashes" value="" dim className="h-[23px] w-[105px]" />
                        <span className="pointer-events-none absolute top-[10px] left-1 h-[2px] w-20 bg-[#222]" />
                    </div>
                    <input aria-label="Dash offset" defaultValue="0.00" className="h-full w-10 border-2 border-r-0 border-[#b4b4b4] bg-[#f0f0f0] pl-px" />
                    <Spin dim />
                </div>
            </div>
        </section>
    );
}

function Dock() {
    return (
        <div className="ml-[6px] flex w-[277px] shrink-0 border-t border-l border-[#a0a0a0]">
            <div className="flex min-w-0 flex-1 flex-col overflow-hidden border-t border-l border-black bg-[#f0f0f0]">
                <div className="mr-[3px] flex min-h-0 flex-1 flex-col">
                    <AlignPanel />
                    <StrokePanel />
                </div>
            </div>
        </div>
    );
}

/* ---------- command and snap bars ---------- */

const page = <path d="M3.500 1.500H11L14.500 5V16.500H3.500Z" fill="#f8f8f6" stroke="#777" />;
const lens = (
    <>
        <path d="M12.500 13L16 16.500" stroke="#111" strokeWidth="3" strokeLinecap="round" />
        <circle cx="8.500" cy="8.500" r="7" fill="#dfe9f5" stroke="#333" strokeWidth="1.300" />
    </>
);
const pair = (
    <>
        <path d="M1.500 1.500H11.500V11.500H1.500Z" fill="#aebfd2" stroke="#222f40" />
        <path d="M5.500 5.500H16.500V16.500H5.500Z" fill="#d3e1f2" stroke="#222f40" />
    </>
);

const commands: ([string, ReactNode] | null)[] = [
    ['New', page],
    ['Open', <><path d="M2.500 14.500V3.500H7L8.500 5.500H15.500V14.500Z" fill="#bfc99b" stroke="#66704a" /><path d="M2.500 14.500L3.500 8.500H16.500V14.500Z" fill="#dbe2c2" stroke="#66704a" /></>],
    ['Save', <><path d="M1.500 1.500H16.500V16.500H2.500L1.500 15.500Z" fill="#4672ae" stroke="#24406a" /><path d="M3.500 1.500H14.500V8H3.500Z" fill="#fff" /><path d="M3.500 2.500H14.500" stroke="#d8202a" strokeWidth="2.500" /><path d="M5 10.500H13V16H5Z" fill="#cfd4d9" /><path d="M7 12H9V15H7Z" fill="#333" /></>],
    ['Print', <><path d="M4.500 1.500H13.500V9H4.500Z" fill="#fff" stroke="#666" /><path d="M6 4H12M6 6.500H12" stroke="#888" /><path d="M1.500 9.500L4 8.500H14L16.500 9.500V15.500H1.500Z" fill="#d4d4d0" stroke="#555" /><path d="M3 12.500H15" stroke="#666" strokeWidth="1.500" /></>],
    null,
    ['Import', <><path d="M5.500 1.500H12L16.500 5.500V16.500H5.500Z" fill="#fff" stroke="#222" /><path d="M1 9.500H10M7.500 6.500L10.500 9.500L7.500 12.500" stroke="#000" strokeWidth="1.500" /></>],
    ['Export', <><path d="M2.500 1.500H9L12.500 5V16.500H2.500Z" fill="#fff" stroke="#222" /><path d="M7 9.500H16M13.500 6.500L16.500 9.500L13.500 12.500" stroke="#000" strokeWidth="1.500" /></>],
    null,
    ['Undo', <>{page}<path d="M6 7L12 13M12 7L6 13" stroke="#e03030" strokeWidth="1.600" /></>],
    ['Redo', <><path d="M3.500 1.500H11L14.500 5V16.500H3.500Z" fill="#aaa" stroke="#666" /><path d="M3.500 1.500H11L14.500 5V16.500H3.500Z" fill="url(#hatch)" /><path d="M6 7L12 13M12 7L6 13" stroke="#c05858" strokeWidth="1.200" /></>],
    null,
    ['Copy', <><path d="M1.500 1.500H11.500V12.500H1.500Z" fill="#f6f6f4" stroke="#999" /><path d="M6.500 5.500H16.500V13.500L13.500 16.500H6.500Z" fill="#fbfbfa" stroke="#888" /><path d="M8.500 8.500H14.500M8.500 10.500H14.500M8.500 12.500H12.500" stroke="#aaa" /></>],
    ['Cut', <><path d="M5 1L10.500 11M13 1L7.500 11" stroke="#8a9a8a" strokeWidth="2" /><circle cx="4.500" cy="13.500" r="2.700" stroke="#b87414" strokeWidth="2.200" /><circle cx="13" cy="13.500" r="2.700" stroke="#b87414" strokeWidth="2.200" /></>],
    ['Paste', <><path d="M2 2.500H16V16.500H2Z" fill="#b57a24" stroke="#6e4710" /><path d="M4.500 4.500H13.500V14.500H4.500Z" fill="#f2f2ee" /><path d="M6 1H12V4.500H6Z" fill="#777" /><path d="M6 7H12M6 9.500H12M6 12H10" stroke="#999" /></>],
    null,
    ['Zoom selection', <>{lens}<path d="M5 5.500H12V11.500H5Z" stroke="#111" strokeDasharray="1.500 1" /></>],
    ['Zoom drawing', <>{lens}<path d="M4.500 4.500H9.500V9.500H4.500Z" fill="#ffe680" stroke="#222" /><path d="M7.500 7.500H12.500V12H7.500Z" fill="#ffe680" stroke="#222" /></>],
    ['Zoom page', <>{lens}<path d="M6 4.500H11.500V12.500H6Z" fill="#fff" stroke="#222" /></>],
    null,
    ['Duplicate', pair],
    ['Clone', <>{pair}<path d="M8 10H14V14.500H8Z" fill="#f8c820" stroke="#222" /><path d="M9.500 10V7.500H12.500V10" stroke="#222" /></>],
    ['Unlink clone', <>{pair}<path d="M8 10H14V14.500H8Z" fill="#7fd07a" stroke="#222" /><path d="M9.500 7.500H12.500V10" stroke="#222" /></>],
    null,
    ['Group', <><circle cx="11" cy="7" r="5" fill="#d2e1f3" stroke="#333" /><path d="M3.500 8.500H9.500V14.500H3.500Z" fill="#b9cfe8" stroke="#333" /><path d="M0 0H2V2H0ZM16 0H18V2H16ZM0 16H2V18H0ZM16 16H18V18H16Z" fill="#000" /></>],
];

const snapArrow = (
    <>
        <path d="M6 6L12 11" stroke="#000" strokeWidth="1.500" strokeDasharray="3 .6" />
        <path d="M12.500 7.500V12H8Z" fill="#000" />
        <circle cx="4" cy="4" r="2.200" fill="#8a8aff" stroke="#2a2ae0" strokeWidth="1.300" />
        <circle cx="14" cy="14" r="2.200" fill="#7db98a" stroke="#2b7a3c" strokeWidth="1.300" />
    </>
);
const dot = (x: number, y: number) => <circle cx={x} cy={y} r="1.700" fill="#6fae7c" stroke="#2f6f3c" />;

const snaps: ([string, ReactNode, boolean?] | null)[] = [
    ['Enable snapping', snapArrow, true],
    null,
    ['Snap bounding boxes', snapArrow],
    ['Snap to bounding box edges', <path d="M14.500 1V14.500H1" stroke="#5d9a68" strokeDasharray="2 1.500" />],
    ['Snap bounding box corners', <><path d="M14.500 2V13.500H2" stroke="#666" strokeDasharray="2 1.500" />{dot(14, 14)}</>],
    ['Snap midpoints of edges', <><path d="M14.500 5V14.500H2" stroke="#555" strokeDasharray="2 1.500" />{dot(14, 3)}</>],
    ['Snap bounding box centers', <><path d="M14.500 2V15.500H2" stroke="#555" strokeDasharray="2 1.500" />{dot(5, 5)}</>],
    null,
    ['Snap nodes', snapArrow, true],
    ['Snap to paths', <path d="M2 3C10 3 14 8 9 14M16 11C15 14 13 15 9 14.500" stroke="#1c8a2a" strokeWidth="1.500" />],
    ['Snap to path intersections', <><path d="M2 15L16 3M2 11L16 7" stroke="#555" />{dot(9, 9)}</>],
    ['Snap to cusp nodes', <><path d="M2 3C10 3 14 8 9 14M16 11C15 14 13 14 10 13.500" stroke="#777" strokeWidth="1.200" />{dot(9, 14)}</>],
    ['Snap to smooth nodes', <><path d="M2 4L9 4.500C13 7 9 12 10 15C13 16 15 15 16 12" stroke="#777" strokeWidth="1.200" />{dot(9, 5)}</>],
    ['Snap midpoints of lines', <><path d="M2 15L16 3" stroke="#555" /><path d="M2 16L4 10M5 14L7 8M11 10L13 4M14 8L16 2" stroke="#d02020" strokeWidth="1.500" />{dot(9, 9)}</>],
    null,
    ['Snap other points', snapArrow, true],
    ['Snap object centers', <><path d="M14.500 3V14.500H2" stroke="#777" />{dot(7, 7)}</>],
    ['Snap rotation centers', <><path d="M14.500 3V15.500H3" stroke="#444" strokeDasharray="2 1.500" /><path d="M4 8.500H10M7 5.500V11.500" stroke="#333" strokeWidth="1.300" /></>],
    ['Snap text baselines', <><path d="M2 15H16" stroke="#1c8a2a" strokeWidth="1.500" /><text x="4" y="14" fontSize="16" fontWeight="bold" fontFamily="'DejaVu Sans', sans-serif" fill="#1a1a1a">A</text>{dot(3, 14)}</>],
    null,
    ['Snap to page border', <path d="M3.500 2.500H13.500V16.500H3.500Z" fill="#e6e6e6" stroke="#333" />],
    ['Snap to grids', <path d="M1 3.500H17M1 8.500H17M1 13.500H17M3.500 1V17M8.500 1V17M13.500 1V17" stroke="#0000e8" />, true],
    ['Snap to guides', <path d="M2.500 1V17M14.500 1V17M12 1L6 17" stroke="#0000e8" strokeWidth="1.300" />, true],
];

function SideBar({ items, children }: { items: ([string, ReactNode, boolean?] | null)[]; children?: ReactNode }) {
    return (
        <div className="flex w-[30px] shrink-0 flex-col items-center overflow-hidden bg-white pt-[2px]">
            {items.map((item, i) =>
                item ? (
                    <button
                        type="button"
                        key={item[0]}
                        title={item[0]}
                        className={`flex size-[26px] shrink-0 items-center justify-center border ${item[2] ? 'border-[#99d1ff] bg-[#cce8ff]' : 'border-transparent'}`}
                    >
                        <Ico size={18} box={18}>{item[1]}</Ico>
                    </button>
                ) : (
                    <span key={i} className="my-[5px] h-[2px] w-4 shrink-0 border-b border-[#a0a0a0]" />
                ),
            )}
            {children}
        </div>
    );
}

/* ---------- palette and status bar ---------- */

const palette = (
    '000000 1a1a1a 333333 4d4d4d 666666 808080 999999 b3b3b3 cccccc e6e6e6 ececec f2f2f2 f9f9f9 ffffff ' +
    '800000 ff0000 808000 ffff00 008000 00ff00 008080 00ffff 000080 0000ff 800080 ff00ff ' +
    '2b0000 550000 800000 aa0000 d40000 ff0000 ff2a2a ff5555 ff8080 ffaaaa ffd5d5 ' +
    '280b0b 501616 782121 a02c2c c83737 d35f5f de8787 e9afaf f4d7d7 ' +
    '241c1c 483737 6c5353 916f6f ac9393 c8b7b7 e3dbdb ' +
    '2b1100 552200 803300 aa4400 d45500 ff6600 ff7f2a ff9955 ffb380 ffccaa ffe6d5 ' +
    '28170b 502d16 784421 a05a2c c87137 d38d5f deaa87 e9c6af f4e3d7 ' +
    '241f1c 483e37 6c5d53 917c6f ac9d93 c8beb7 e3dedb ' +
    '2b2200 554400 806600 aa8800 d4aa00 ffcc00 ffd42a ffdd55 ffe680 ffeeaa fff6d5 ' +
    '28220b 504416 786721 a08a2c c8ab37'
).split(' ');

function Palette() {
    return (
        <div className="shrink-0">
            <div className="flex h-5 border-t border-[#dcdcdc]">
                <div className="flex min-w-0 flex-1 overflow-hidden border-t border-b-2 border-l border-t-black border-b-white border-l-[#888] bg-white pt-px pl-px">
                    <button type="button" title="None" className="w-[14px] shrink-0">
                        <Ico size={14} box={14}><path d="M0 0L14 14M14 0L0 14" stroke="#7a1515" strokeWidth="1.300" /></Ico>
                    </button>
                    {palette.map((hex, i) => (
                        <button type="button" key={i} title={`#${hex}`} className="h-[15px] w-[14px] shrink-0" style={{ backgroundColor: `#${hex}` }} />
                    ))}
                </div>
                <button type="button" title="Palette menu" className="flex w-[11px] shrink-0">
                    <Ico size={10} box={10}><path d="M2 5L6 1V9Z" fill="#000" /></Ico>
                </button>
            </div>
            <div className="flex h-4 py-px">
                <button type="button" title="Scroll palette left" className="flex w-[17px] items-center justify-center"><Chevron dir="left" faded /></button>
                <span className="grow-[295] bg-[#cdcdcd]" />
                <span className="grow-[1029]" />
                <button type="button" title="Scroll palette right" className="flex w-[23px] items-center"><Chevron dir="right" /></button>
            </div>
        </div>
    );
}

function StatusBar() {
    return (
        <footer className="flex h-[25px] shrink-0 items-center overflow-hidden pl-[2px] whitespace-nowrap">
            <dl className="grid w-[124px] shrink-0 grid-cols-[70px_1fr] self-start leading-[14px]">
                <dt>Fill:</dt><dd>N/A</dd>
                <dt>Stroke:</dt><dd>N/A</dd>
            </dl>
            <label htmlFor="opacity" className="w-[14px]">O:</label>
            <div className="flex h-[21px] text-[#808080]">
                <input id="opacity" defaultValue="0" className="h-full w-9 border-2 border-r-0 border-[#b4b4b4] bg-[#f0f0f0] pl-[2px]" />
                <Spin dim />
            </div>
            <span className="ml-[3px] h-full w-px bg-[#a5a5a5]" />
            <button type="button" title="Layer visibility" className="ml-1">
                <Ico size={10} box={11}><path d="M.5 6C3 2.500 8 2.500 10.500 6C8 9 3 9 .5 6Z" fill="#ddd" stroke="#333" /><circle cx="5.500" cy="5.500" r="2" fill="#222" /><path d="M2 3L1 1.500M5.500 2.500V1M9 3L10 1.500" stroke="#444" /></Ico>
            </button>
            <button type="button" title="Layer lock" className="mr-[3px] ml-[5px]"><LockIcon /></button>
            <Picker id="layer" label="Current layer" value="▪Layer 1" bold className="h-[25px] w-[69px]" />
            <p className="ml-[5px] min-w-0 flex-1 overflow-hidden">
                No objects selected. Click, Shift+click, Alt+scroll mouse on top of objects, or drag around objects to select.
            </p>
            <span className="h-full w-px bg-[#a5a5a5]" />
            <dl className="grid w-[72px] shrink-0 grid-cols-[12px_1fr] self-start pt-px pl-[3px] leading-[14px]">
                <dt>X:</dt><dd className="font-['Liberation_Mono',monospace]">2464.77</dd>
                <dt>Y:</dt><dd className="font-['Liberation_Mono',monospace]">-139.40</dd>
            </dl>
            <label htmlFor="zoom" className="w-[11px]">Z:</label>
            <div className="flex h-[21px]">
                <input id="zoom" defaultValue="50%" className="h-full w-[46px] border-2 border-r-0 border-[#b4b4b4] bg-white pl-2" />
                <Spin />
            </div>
            <span className="ml-[7px] self-end">
                <Ico size={12} box={12}><path d="M9 1H11V3H9ZM5 5H7V7H5ZM9 5H11V7H9ZM1 9H3V11H1ZM5 9H7V11H5ZM9 9H11V11H9Z" fill="#bbb" /></Ico>
            </span>
        </footer>
    );
}

export default function App() {
    return (
        <div className="flex h-screen flex-col overflow-hidden bg-[#f0f0f0] font-['Lato','Noto_Sans',sans-serif] text-[12px] leading-4 text-black">
            <TitleBar />
            <MenuBar />
            <ControlsBar />
            <div className="flex min-h-0 flex-1">
                <Toolbox />
                <Workspace />
                <Dock />
                {/* dock scrollbar */}
                <div className="mr-[2px] ml-[2px] flex w-[15px] shrink-0 flex-col items-center">
                    <button type="button" title="Scroll dock up" className="flex h-[17px] items-center"><Chevron dir="up" faded /></button>
                    <span className="w-full grow-[466] bg-[#cdcdcd]" />
                    <span className="grow-[90]" />
                    <button type="button" title="Scroll dock down" className="flex h-[15px] items-center"><Chevron dir="down" /></button>
                </div>
                <SideBar items={commands}><More /></SideBar>
                <SideBar items={snaps} />
            </div>
            <Palette />
            <StatusBar />
        </div>
    );
}
